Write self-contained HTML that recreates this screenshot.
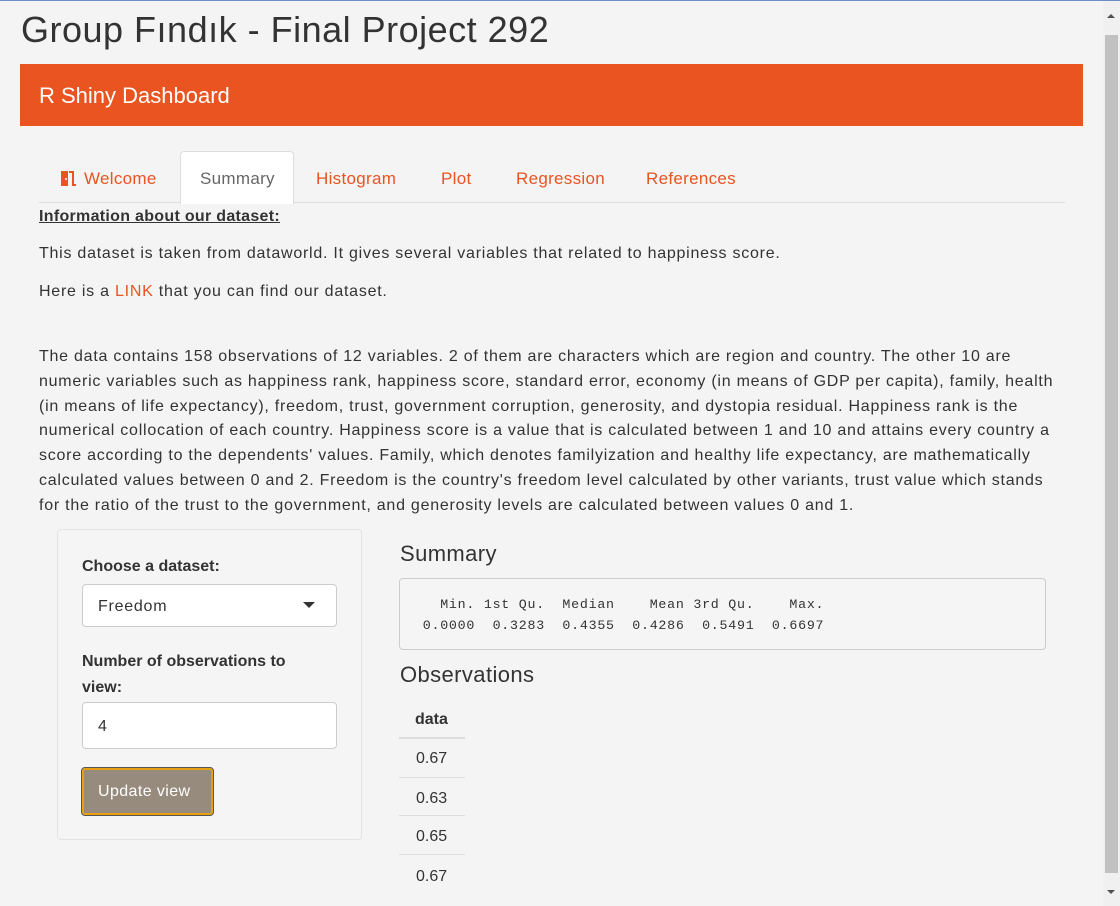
<!DOCTYPE html>
<html><head><meta charset="utf-8"><style>
body{margin:0;width:1120px;height:906px;overflow:hidden;background:#f4f4f4;font-family:"Liberation Sans",sans-serif;color:#333;position:relative}
.a{position:absolute;white-space:nowrap}
.o{color:#e95420}
.t{letter-spacing:0.75px}
</style></head><body>
<div class="a" style="left:0;top:0;width:1120px;height:1px;background:#6a8fc8"></div>
<div class="a" style="left:21px;top:9px;font-size:36px;color:#333;letter-spacing:0.5px">Group Fındık - Final Project 292</div>
<div class="a" style="left:20px;top:64px;width:1063px;height:62px;background:#e95420"></div>
<div class="a" style="left:39px;top:83px;font-size:22px;color:#fff">R Shiny Dashboard</div>
<div class="a" style="left:39px;top:202px;width:1026px;height:1px;background:#ddd"></div>
<div class="a" style="left:180px;top:151px;width:112px;height:52px;background:#fff;border:1px solid #ddd;border-bottom:none;border-radius:4px 4px 0 0"></div>
<svg class="a" style="left:59px;top:169px" width="18" height="18" viewBox="0 0 18 18"><path d="M2 2h7v15H2z" fill="#e95420"/><path d="M10 2h5v13h2v2h-4V4h-3z" fill="#e95420"/><circle cx="7" cy="10" r="1" fill="#fff"/></svg>
<div class="a o" style="left:84px;top:169px;font-size:17px;letter-spacing:0.3px">Welcome</div>
<div class="a" style="left:200px;top:169px;font-size:17px;color:#666;letter-spacing:0.3px">Summary</div>
<div class="a o" style="left:316px;top:169px;font-size:17px;letter-spacing:0.3px">Histogram</div>
<div class="a o" style="left:441px;top:169px;font-size:17px;letter-spacing:0.3px">Plot</div>
<div class="a o" style="left:516px;top:169px;font-size:17px;letter-spacing:0.3px">Regression</div>
<div class="a o" style="left:646px;top:169px;font-size:17px;letter-spacing:0.3px">References</div>
<div class="a t" style="left:39px;top:208px;font-size:16px;font-weight:bold;text-decoration:underline;letter-spacing:0.3px">Information about our dataset:</div>
<div class="a t" style="left:39px;top:245px;font-size:16px">This dataset is taken from dataworld. It gives several variables that related to happiness score.</div>
<div class="a t" style="left:39px;top:283px;font-size:16px">Here is a <span class="o">LINK</span> that you can find our dataset.</div>
<div class="a t" style="left:39px;top:345px;font-size:16px;line-height:24.8px">The data contains 158 observations of 12 variables. 2 of them are characters which are region and country. The other 10 are<br>numeric variables such as happiness rank, happiness score, standard error, economy (in means of GDP per capita), family, health<br>(in means of life expectancy), freedom, trust, government corruption, generosity, and dystopia residual. Happiness rank is the<br>numerical collocation of each country. Happiness score is a value that is calculated between 1 and 10 and attains every country a<br>score according to the dependents' values. Family, which denotes familyization and healthy life expectancy, are mathematically<br>calculated values between 0 and 2. Freedom is the country's freedom level calculated by other variants, trust value which stands<br>for the ratio of the trust to the government, and generosity levels are calculated between values 0 and 1.</div>
<div class="a" style="left:57px;top:529px;width:303px;height:309px;background:#f5f5f5;border:1px solid #e3e3e3;border-radius:4px"></div>
<div class="a" style="left:82px;top:558px;font-size:16px;font-weight:bold">Choose a dataset:</div>
<div class="a" style="left:82px;top:584px;width:253px;height:41px;background:#fff;border:1px solid #ccc;border-radius:4px"></div>
<div class="a t" style="left:98px;top:598px;font-size:16px">Freedom</div>
<div class="a" style="left:303px;top:602px;width:0;height:0;border-left:6px solid transparent;border-right:6px solid transparent;border-top:6px solid #333"></div>
<div class="a" style="left:82px;top:649px;font-size:16px;font-weight:bold;line-height:26px">Number of observations to<br>view:</div>
<div class="a" style="left:82px;top:702px;width:253px;height:45px;background:#fff;border:1px solid #ccc;border-radius:4px"></div>
<div class="a" style="left:98px;top:718px;font-size:16px">4</div>
<div class="a" style="left:82px;top:768px;width:127px;height:43px;background:#978b7d;border:2px solid #e8a012;outline:1px solid #555;border-radius:3px"></div>
<div class="a t" style="left:98px;top:783px;font-size:16px;color:#fff;letter-spacing:0.4px">Update view</div>
<div class="a" style="left:400px;top:541px;font-size:22px;letter-spacing:0.4px">Summary</div>
<div class="a" style="left:399px;top:578px;width:645px;height:70px;background:#f5f5f5;border:1px solid #ccc;border-radius:4px"></div>
<div class="a" style="left:414px;top:594px;font-family:'Liberation Mono',monospace;font-size:13.3px;line-height:21px;white-space:pre;letter-spacing:0.75px">   Min. 1st Qu.  Median    Mean 3rd Qu.    Max. 
 0.0000  0.3283  0.4355  0.4286  0.5491  0.6697 </div>
<div class="a" style="left:400px;top:662px;font-size:22px;letter-spacing:0.4px">Observations</div>
<div class="a" style="left:415px;top:711px;font-size:16px;font-weight:bold">data</div>
<div class="a" style="left:399px;top:737px;width:66px;height:2px;background:#ddd"></div>
<div class="a" style="left:416px;top:750px;font-size:16px">0.67</div>
<div class="a" style="left:399px;top:777px;width:66px;height:1px;background:#ddd"></div>
<div class="a" style="left:416px;top:790px;font-size:16px">0.63</div>
<div class="a" style="left:399px;top:815px;width:66px;height:1px;background:#ddd"></div>
<div class="a" style="left:416px;top:828px;font-size:16px">0.65</div>
<div class="a" style="left:399px;top:854px;width:66px;height:1px;background:#ddd"></div>
<div class="a" style="left:416px;top:868px;font-size:16px">0.67</div>
<div class="a" style="left:1103px;top:1px;width:17px;height:905px;background:#f0f0f0"></div>
<div class="a" style="left:1105px;top:35px;width:13px;height:838px;background:#c1c1c1"></div>
<div class="a" style="left:1107px;top:14px;width:0;height:0;border-left:4px solid transparent;border-right:4px solid transparent;border-bottom:4px solid #505050"></div>
<div class="a" style="left:1107px;top:890px;width:0;height:0;border-left:4px solid transparent;border-right:4px solid transparent;border-top:4px solid #505050"></div>
</body></html>
